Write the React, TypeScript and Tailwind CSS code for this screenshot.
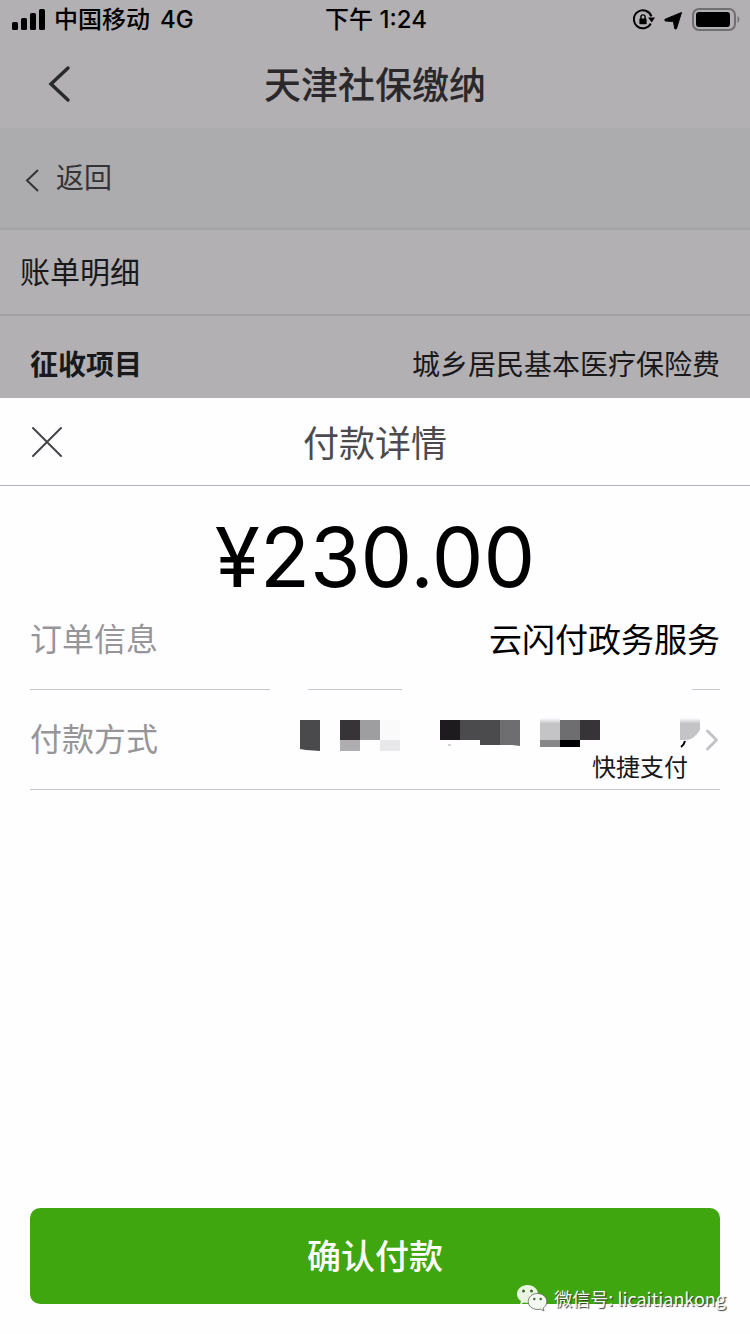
import { ChevronRight } from "lucide-react";

const SignalIcon = () => (
  <svg width="34" height="22" viewBox="0 0 34 22" fill="#000" aria-hidden="true">
    <rect x="0" y="13" width="6" height="8" rx="1.5" />
    <rect x="9" y="9" width="6" height="12" rx="1.5" />
    <rect x="18" y="4" width="6" height="17" rx="1.5" />
    <rect x="27" y="0" width="6" height="21" rx="1.5" />
  </svg>
);

const RotationLockIcon = () => (
  <svg width="22" height="22" viewBox="0 0 22 22" fill="none" aria-hidden="true">
    <path d="M17.8 14.6A9 9 0 1 1 18.4 7.4" stroke="#000" strokeWidth="2" />
    <path d="M15 8.400h7l-3.200 5.200z" fill="#000" />
    <rect x="6.400" y="9.600" width="7.200" height="5.600" rx="0.8" fill="#000" />
    <path d="M7.900 10V8a2.100 2.100 0 0 1 4.200 0v2" stroke="#000" strokeWidth="1.4" />
  </svg>
);

const LocationIcon = () => (
  <svg width="19" height="19" viewBox="0 0 19 19" aria-hidden="true">
    <path
      d="M17.500 1.500 12.500 17.500a1 1 0 0 1-1.800 0L9.500 10.500 1.500 10a1 1 0 0 1-.3-1.800z"
      fill="#000"
      stroke="#000"
      strokeWidth="1"
      strokeLinejoin="round"
    />
  </svg>
);

const BatteryIcon = () => (
  <svg width="48" height="24" viewBox="0 0 48 24" aria-hidden="true">
    <rect x="1" y="1" width="42" height="21" rx="6" fill="none" stroke="#6f6e70" strokeWidth="2" />
    <rect x="4" y="4" width="34" height="15" rx="3" fill="#000" />
    <path d="M45.5 8c2.4 1.4 2.4 5.6 0 7z" fill="#6f6e70" />
  </svg>
);

const HeaderBackIcon = () => (
  <svg width="24" height="40" viewBox="0 0 24 40" fill="none" stroke="#2a292b" strokeWidth="3.5" strokeLinecap="round" aria-hidden="true">
    <path d="M20 4 3 20l17 16" />
  </svg>
);

const PageBackIcon = () => (
  <svg width="16" height="24" viewBox="0 0 16 24" fill="none" stroke="#343335" strokeWidth="2" aria-hidden="true">
    <path d="M14 2 3 12.500l11 10.500" />
  </svg>
);

const CloseIcon = () => (
  <svg width="32" height="32" viewBox="0 0 32 32" stroke="#454446" strokeWidth="2" strokeLinecap="round" aria-hidden="true">
    <path d="M2 2 30 30M30 2 2 30" />
  </svg>
);

// masked bank card name and number
const MaskedCard = () => (
  <svg width="400" height="34" viewBox="0 0 400 34" role="img" aria-label="银行卡">
    <defs>
      <linearGradient id="soft" x1="0" y1="0" x2="0" y2="1">
        <stop offset="0" stopColor="#fefdff" />
        <stop offset="0.25" stopColor="#c4c3c5" />
        <stop offset="1" stopColor="#c4c3c5" />
      </linearGradient>
    </defs>
    <path d="M0 2h20v31l-14-1-6-1z" fill="#4a494b" />
    <rect x="40" y="2" width="20" height="20" fill="#363437" />
    <rect x="60" y="2" width="20" height="20" fill="#9e9d9f" />
    <rect x="80" y="2" width="20" height="20" fill="#fafafb" />
    <rect x="40" y="22" width="20" height="11" fill="#aeadaf" />
    <rect x="80" y="22" width="20" height="11" fill="#e8e7e9" />
    <rect x="140" y="2" width="20" height="20" fill="#1d1b1e" />
    <rect x="160" y="2" width="20" height="20" fill="#4b4a4c" />
    <rect x="180" y="2" width="20" height="25" fill="#4b4a4c" />
    <path d="M200 2h20v26l-8-1h-12z" fill="#6e6d6f" />
    <path d="M148 27h3" stroke="#aaa" />
    <rect x="240" y="0" width="20" height="22" fill="url(#soft)" />
    <rect x="260" y="2" width="20" height="20" fill="#6e6d6f" />
    <rect x="280" y="2" width="20" height="20" fill="#363437" />
    <rect x="240" y="22" width="20" height="7" fill="#868587" />
    <rect x="260" y="22" width="20" height="7" fill="#000" />
    <path d="M380 0h20v12q-6 10-15 10h-5z" fill="url(#soft)" />
    <path d="M385 23q-1 4-4 6" stroke="#000" strokeWidth="2" fill="none" />
  </svg>
);

const WechatIcon = () => (
  <svg width="32" height="28" viewBox="0 0 32 28" aria-hidden="true">
    <path
      d="M11.5 1C5.5 1 1 5 1 10c0 3 1.5 5.4 4 7l-1 3.5 4-2c1 .3 2.3.5 3.5.5 6 0 10.5-4 10.5-9s-4.5-9-10.5-9z"
      fill="#e9f4e3"
    />
    <circle cx="7.5" cy="7" r="1.5" fill="#3d6b28" />
    <circle cx="15.5" cy="7" r="1.5" fill="#3d6b28" />
    <path
      d="M21.5 9.5c-5.200 0-9.300 3.500-9.300 8s4.100 8 9.300 8c1.100 0 2.100-.1 3-.4l3.500 1.900-.8-3c2.200-1.500 3.600-3.800 3.600-6.500 0-4.500-4.100-8-9.300-8z"
      fill="#f3f8f0"
      stroke="#5a5f58"
      strokeWidth="0.8"
    />
    <circle cx="18.3" cy="15" r="1.2" fill="#3d6b28" />
    <circle cx="24.7" cy="15" r="1.2" fill="#3d6b28" />
  </svg>
);

const StatusBar = () => (
  <div className="grid h-10 grid-cols-3 items-center pr-[10px] pl-3 text-2xl font-medium text-black">
    <div className="flex items-center gap-[10px] whitespace-nowrap">
      <div className="flex items-center gap-2">
        <SignalIcon />
        <span>中国移动</span>
      </div>
      <span>4G</span>
    </div>
    <span className="text-center">下午 1:24</span>
    <div className="flex items-center justify-end gap-[9px]">
      <RotationLockIcon />
      <LocationIcon />
      <BatteryIcon />
    </div>
  </div>
);

const App = () => {
  return (
    <div className="relative flex min-h-screen flex-col bg-[#b2b0b3] font-['Inter','Noto_Sans_CJK_SC',sans-serif] text-[#19181a]">
      <StatusBar />

      <header className="grid h-[88px] grid-cols-[80px_1fr_80px] items-center">
        <button type="button" aria-label="返回上一页" className="pl-12">
          <HeaderBackIcon />
        </button>
        <h1 className="pt-1 text-center text-[37px] font-medium leading-[48px] text-[#2a282b]">天津社保缴纳</h1>
      </header>

      <nav className="flex h-[102px] items-center border-b-2 border-[#a3a2a4] bg-[#acabad] px-6">
        <a href="#" className="flex items-center gap-4 text-[28px] leading-10 text-[#343335]">
          <span className="pt-1">
            <PageBackIcon />
          </span>
          <span>返回</span>
        </a>
      </nav>

      <h2 className="flex h-[86px] items-center border-b-2 border-[#a09fa1] px-5 text-[30px]">账单明细</h2>

      <dl className="flex h-[82px] items-center justify-between px-[30px] pt-4 text-[28px]">
        <dt className="font-bold">征收项目</dt>
        <dd>城乡居民基本医疗保险费</dd>
      </dl>

      <main className="flex flex-1 flex-col bg-[#fefdff]">
        <div className="grid h-[88px] grid-cols-[80px_1fr_80px] items-center border-b border-[#b4b3b5]">
          <button type="button" aria-label="关闭" className="pl-[31px]">
            <CloseIcon />
          </button>
          <h2 className="pt-1 text-center text-[36px] leading-[48px] text-[#4b4a4c]">付款详情</h2>
        </div>

        <p className="pt-6 text-center text-[82px] leading-[96px] text-black">¥230.00</p>

        <section className="px-[30px]">
          <div className="flex h-[83px] justify-between pt-[10px] leading-[48px]">
            <span className="text-[32px] text-[#969597]">订单信息</span>
            <span className="text-[33px] text-black">云闪付政务服务</span>
          </div>
          <div className="flex">
            <div className="h-px w-[240px] bg-[#c7c6c8]" />
            <div className="ml-[38px] h-px w-[94px] bg-[#c7c6c8]" />
            <div className="ml-auto h-px w-7 bg-[#c7c6c8]" />
          </div>

          <button
            type="button"
            className="flex h-[100px] w-full items-center border-b border-[#c7c6c8] text-left"
          >
            <span className="text-[32px] leading-[48px] text-[#969597]">付款方式</span>
            <span className="ml-auto flex flex-col items-end pt-[22px]">
              <MaskedCard />
              <span className="pr-3 text-2xl text-[#19181a]">快捷支付</span>
            </span>
            <ChevronRight size={36} strokeWidth={2} className="-mr-[10px] -ml-[6px] text-[#c4c3c5]" />
          </button>
        </section>

        <div className="mt-auto px-[30px] pb-[30px]">
          <button
            type="button"
            className="h-24 w-full rounded-[10px] bg-[#40a60f] text-[34px] font-medium text-white"
          >
            确认付款
          </button>
        </div>
      </main>

      {/* account watermark */}
      <div className="absolute right-6 bottom-5 flex items-center gap-1.5 font-['Noto_Sans_CJK_SC',sans-serif] text-[18px] leading-8 text-[#f4f9f1] [text-shadow:1px_1px_1px_#333]">
        <WechatIcon />
        <span>微信号: licaitiankong</span>
      </div>
    </div>
  );
};

export default App;
